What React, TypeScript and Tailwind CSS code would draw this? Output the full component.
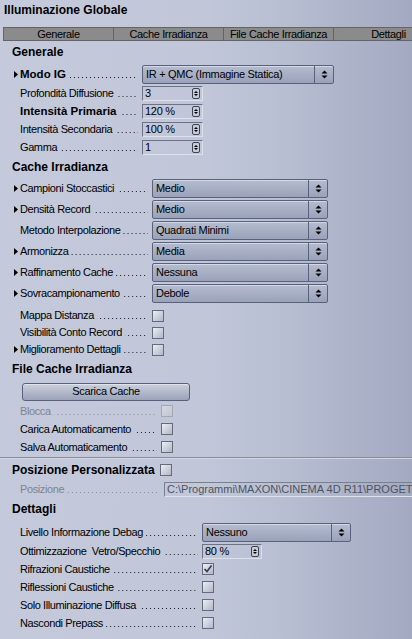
import React from "react";

function Tri() {
  return (
    <svg width="4" height="7" viewBox="0 0 4 7">
      <polygon points="0,0 4,3.5 0,7" fill="#000" />
    </svg>
  );
}

function SelArrows() {
  return (
    <svg width="7" height="9" viewBox="0 0 7 9">
      <polygon points="0.5,3.5 3.5,0.5 6.5,3.5" fill="#000" />
      <polygon points="0.5,5.5 3.5,8.5 6.5,5.5" fill="#000" />
    </svg>
  );
}

function Spin() {
  return (
    <div className="flex h-[11px] w-[8px] shrink-0 items-center justify-center rounded-[2px] border border-[#3e4456] bg-[#c6cbd7]">
      <svg width="4" height="7" viewBox="0 0 4 7">
        <polygon points="0,3 2,1 4,3" fill="#000" />
        <polygon points="0,4 2,6 4,4" fill="#000" />
      </svg>
    </div>
  );
}

function Label({
  text,
  bold,
  disabled,
  w,
}: {
  text: string;
  bold?: boolean;
  disabled?: boolean;
  w: string;
}) {
  return (
    <div className={`flex shrink-0 items-baseline overflow-hidden pr-[4px] ${w}`}>
      <span
        className={`whitespace-pre ${bold ? "text-[11.5px] font-bold" : "tracking-[-0.4px]"} ${
          disabled ? "text-[#7f848f]" : "text-black"
        }`}
      >
        {text}
      </span>
      <span
        className={`ml-[3px] mb-[1px] h-[1px] min-w-0 flex-1 bg-right bg-repeat-x bg-[length:4px_1px] ${
          disabled
            ? "bg-[linear-gradient(to_right,#8a8f99_1px,transparent_1px)]"
            : "bg-[linear-gradient(to_right,#1c1c1c_1px,transparent_1px)]"
        }`}
      />
    </div>
  );
}

function Row({
  h,
  arrow,
  label,
  bold,
  disabled,
  w,
  children,
}: {
  h: string;
  arrow?: boolean;
  label: string;
  bold?: boolean;
  disabled?: boolean;
  w: string;
  children?: React.ReactNode;
}) {
  return (
    <div className={`flex items-center ${h}`}>
      <div className="w-[14px] shrink-0" />
      <div className="flex w-[6px] shrink-0 items-center">{arrow ? <Tri /> : null}</div>
      <Label text={label} bold={bold} disabled={disabled} w={w} />
      {children}
    </div>
  );
}

function Select({ value, w }: { value: string; w: string }) {
  return (
    <div
      className={`flex h-[19px] shrink-0 rounded-[2px] border border-[#58627c] bg-gradient-to-b from-[#b5bcd0] to-[#9aa2b9] shadow-[inset_0_1px_0_#d3d8e4] ${w}`}
    >
      <div className="flex flex-1 items-center overflow-hidden whitespace-nowrap pl-[3px] tracking-[-0.3px]">
        {value}
      </div>
      <div className="flex w-[19px] shrink-0 items-center justify-center border-l border-[#58627c]">
        <SelArrows />
      </div>
    </div>
  );
}

function NumField({ value, w }: { value: string; w: string }) {
  return (
    <div
      className={`flex h-[15px] shrink-0 items-center border-t border-l border-[#6d7387] border-r border-b border-r-[#dde1ea] border-b-[#dde1ea] pl-[2px] pr-[2px] ${w}`}
    >
      <span className="flex-1 tracking-[-0.3px]">{value}</span>
      <Spin />
    </div>
  );
}

function Check({ checked, disabled }: { checked?: boolean; disabled?: boolean }) {
  return (
    <div
      className={`flex h-[12px] w-[12px] shrink-0 items-center justify-center border ${
        disabled
          ? "border-[#a3a8b5] bg-gradient-to-br from-[#d6d9e2] to-[#c2c6d2]"
          : "border-[#666b7a] bg-gradient-to-br from-[#eceef3] to-[#b2b7c6]"
      }`}
    >
      {checked ? (
        <svg width="10" height="10" viewBox="0 0 10 10">
          <polyline points="1.5,5 4,7.5 8.5,1.5" fill="none" stroke="#3a3d48" strokeWidth="1.7" />
        </svg>
      ) : null}
    </div>
  );
}

function Header({ text, h }: { text: string; h: string }) {
  return <div className={`flex items-center pl-[12px] text-[12px] font-bold ${h}`}>{text}</div>;
}

export default function App() {
  return (
    <div className="relative h-[639px] w-[412px] overflow-hidden bg-[linear-gradient(to_right,#c4cadb_0%,#c1c7d9_50%,#b7bed2_70%,#a2a9c1_100%)] font-['Liberation_Sans',Arial,sans-serif] text-[11px] leading-[13px] text-black">
      <div className="h-[27px] pl-[4px] pt-[3px] text-[12px] font-bold leading-[14px]">
        Illuminazione Globale
      </div>
      <div className="ml-[3px] flex h-[14px] overflow-hidden border-y border-[#646464] bg-[#8b8b8b] leading-[12px] tracking-[-0.35px]">
        <div className="w-[110px] shrink-0 border-l border-[#646464] text-center">Generale</div>
        <div className="w-[110px] shrink-0 border-l border-[#646464] text-center">Cache Irradianza</div>
        <div className="w-[110px] shrink-0 border-l border-[#646464] text-center">File Cache Irradianza</div>
        <div className="w-[110px] shrink-0 border-l border-[#646464] text-center">Dettagli</div>
      </div>

      <Header text="Generale" h="h-[23px]" />
      <Row h="h-[20px]" arrow bold label="Modo IG" w="w-[122px]">
        <Select value="IR + QMC (Immagine Statica)" w="w-[192px]" />
      </Row>
      <Row h="h-[18px]" label="Profondità Diffusione" w="w-[122px]">
        <NumField value="3" w="w-[61px]" />
      </Row>
      <Row h="h-[18px]" bold label="Intensità Primaria" w="w-[122px]">
        <NumField value="120 %" w="w-[61px]" />
      </Row>
      <Row h="h-[18px]" label="Intensità Secondaria" w="w-[122px]">
        <NumField value="100 %" w="w-[61px]" />
      </Row>
      <Row h="h-[18px]" label="Gamma" w="w-[122px]">
        <NumField value="1" w="w-[61px]" />
      </Row>

      <Header text="Cache Irradianza" h="h-[22px]" />
      <Row h="h-[21px]" arrow label="Campioni Stoccastici" w="w-[132px]">
        <Select value="Medio" w="w-[176px]" />
      </Row>
      <Row h="h-[21px]" arrow label="Densità Record" w="w-[132px]">
        <Select value="Medio" w="w-[176px]" />
      </Row>
      <Row h="h-[21px]" label="Metodo Interpolazione" w="w-[132px]">
        <Select value="Quadrati Minimi" w="w-[176px]" />
      </Row>
      <Row h="h-[21px]" arrow label="Armonizza" w="w-[132px]">
        <Select value="Media" w="w-[176px]" />
      </Row>
      <Row h="h-[21px]" arrow label="Raffinamento Cache" w="w-[132px]">
        <Select value="Nessuna" w="w-[176px]" />
      </Row>
      <Row h="h-[21px]" arrow label="Sovracampionamento" w="w-[132px]">
        <Select value="Debole" w="w-[176px]" />
      </Row>
      <div className="h-[3px]" />
      <Row h="h-[17px]" label="Mappa Distanza" w="w-[132px]">
        <Check />
      </Row>
      <Row h="h-[17px]" label="Visibilità Conto Record" w="w-[132px]">
        <Check />
      </Row>
      <Row h="h-[17px]" arrow label="Miglioramento Dettagli" w="w-[132px]">
        <Check />
      </Row>

      <Header text="File Cache Irradianza" h="h-[23px]" />
      <div className="flex h-[21px] items-center pl-[22px]">
        <div className="flex h-[18px] w-[168px] items-center justify-center rounded-[3px] border border-[#58627c] bg-gradient-to-b from-[#cbd0dd] to-[#9ba3ba] tracking-[-0.3px] shadow-[inset_0_1px_0_#dfe3ec]">
          Scarica Cache
        </div>
      </div>
      <Row h="h-[18px]" disabled label="Blocca" w="w-[141px]">
        <Check disabled />
      </Row>
      <Row h="h-[18px]" label="Carica Automaticamento" w="w-[141px]">
        <Check />
      </Row>
      <Row h="h-[18px]" label="Salva Automaticamento" w="w-[141px]">
        <Check />
      </Row>
      <div className="mt-[1px] h-[1px] bg-[#8a8e98]" />
      <div className="h-[1px] bg-[#d2d6e0]" />
      <div className="flex h-[22px] items-center pl-[12px]">
        <span className="text-[12px] font-bold">Posizione Personalizzata</span>
        <div className="ml-[5px]">
          <Check />
        </div>
      </div>
      <Row h="h-[16px]" disabled label="Posizione" w="w-[144px]">
        <div className="flex h-[15px] w-[248px] shrink-0 items-center overflow-hidden whitespace-nowrap border-t border-l border-[#7b808d] border-b border-b-[#dfe2ea] pl-[2px] text-[#4f5360]">
          {"C:\\Programmi\\MAXON\\CINEMA 4D R11\\PROGET"}
        </div>
      </Row>

      <Header text="Dettagli" h="h-[25px]" />
      <Row h="h-[20px]" label="Livello Informazione Debag" w="w-[182px]">
        <Select value="Nessuno" w="w-[149px]" />
      </Row>
      <Row h="h-[18px]" label="Ottimizzazione  Vetro/Specchio" w="w-[182px]">
        <NumField value="80 %" w="w-[60px]" />
      </Row>
      <Row h="h-[18px]" label="Rifrazioni Caustiche" w="w-[182px]">
        <Check checked />
      </Row>
      <Row h="h-[18px]" label="Riflessioni Caustiche" w="w-[182px]">
        <Check />
      </Row>
      <Row h="h-[18px]" label="Solo Illuminazione Diffusa" w="w-[182px]">
        <Check />
      </Row>
      <Row h="h-[18px]" label="Nascondi Prepass" w="w-[182px]">
        <Check />
      </Row>
    </div>
  );
}
